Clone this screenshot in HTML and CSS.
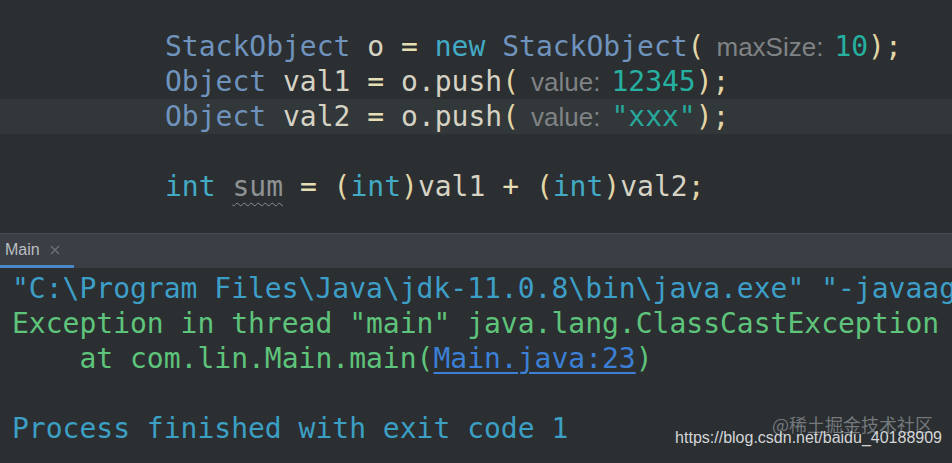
FILE: index.html
```html
<!DOCTYPE html>
<html>
<head>
<meta charset="utf-8">
<link rel="stylesheet" href="styles.css">
</head>
<body>
<div class="page">
  <div class="editor">
    <div class="line"><span class="type">StackObject</span> <span class="id">o</span> <span class="op">=</span> <span class="kw">new</span> <span class="type">StackObject</span><span class="paren">(</span><span class="hint">maxSize:</span><span class="num">10</span><span class="paren">)</span><span class="semi">;</span></div>
    <div class="line"><span class="type">Object</span> <span class="id">val1</span> <span class="op">=</span> <span class="id">o.push</span><span class="paren">(</span><span class="hint">value:</span><span class="num">12345</span><span class="paren">)</span><span class="semi">;</span></div>
    <div class="line current"><span class="type">Object</span> <span class="id">val2</span> <span class="op">=</span> <span class="id">o.push</span><span class="paren">(</span><span class="hint">value:</span><span class="str">"xxx"</span><span class="paren">)</span><span class="semi">;</span></div>
    <div class="line"> </div>
    <div class="line"><span class="kw">int</span> <span class="unused">sum</span> <span class="op">=</span> <span class="paren">(</span><span class="kw">int</span><span class="paren">)</span><span class="id">val1</span> <span class="op">+</span> <span class="paren">(</span><span class="kw">int</span><span class="paren">)</span><span class="id">val2</span><span class="semi">;</span></div>
  </div>
  <div class="tabbar">
    <div class="tab">
      <span class="tab-title">Main</span>
      <svg class="tab-close" width="10" height="10" viewBox="0 0 10 10"><path d="M1 1 L9 9 M9 1 L1 9" stroke="#6d7277" stroke-width="1.3" fill="none"/></svg>
    </div>
  </div>
  <div class="console">
    <div class="cline cmd">"C:\Program Files\Java\jdk-11.0.8\bin\java.exe" "-javaagent:C:\Program Files\JetBrains</div>
    <div class="cline err">Exception in thread "main" java.lang.ClassCastException</div>
    <div class="cline err">    at com.lin.Main.main(<span class="link">Main.java:23</span>)</div>
    <div class="cline"> </div>
    <div class="cline sys">Process finished with exit code 1</div>
  </div>
  <div class="watermark">
    <span class="wm-cn">@稀土掘金技术社区</span>
    <span class="wm-url">https://blog.csdn.net/baidu_40188909</span>
  </div>
</div>
</body>
</html>
```
FILE: styles.css
```css
html, body {
  margin: 0;
  padding: 0;
  background: #2b2f32;
}
.page {
  position: relative;
  width: 952px;
  height: 463px;
  overflow: hidden;
  background: #2b2f32;
}
.editor {
  height: 233px;
  box-sizing: border-box;
  padding-top: 29px;
  font-family: "DejaVu Sans Mono", monospace;
  font-size: 28px;
  line-height: 35px;
}
.line {
  height: 35px;
  padding-left: 165px;
  white-space: pre;
}
.line.current {
  background: #32373a;
}
.type { color: #6f93bd; }
.kw { color: #43aac4; }
.id { color: #d6d3c4; }
.op { color: #e6dfb5; }
.paren { color: #e3d6a6; }
.semi { color: #e3d6a6; }
.num { color: #25b0a0; }
.str { color: #27a89b; }
.unused {
  color: #8f9294;
  text-decoration: underline wavy #8a8d90;
  text-decoration-thickness: 1px;
  text-underline-offset: 6px;
}
.hint {
  display: inline-block;
  font-family: "Liberation Sans", Arial, sans-serif;
  font-size: 26px;
  color: #808385;
  padding: 0 11px 0 12px;
}
.tabbar {
  height: 35px;
  box-sizing: border-box;
  border-top: 1px solid #474b51;
  background: #3b3f45;
  display: flex;
}
.tab {
  width: 74px;
  box-sizing: border-box;
  padding-left: 5px;
  display: flex;
  align-items: center;
  gap: 10px;
  border-bottom: 3px solid #4a88c7;
}
.tab-title {
  font-family: "Liberation Sans", Arial, sans-serif;
  font-size: 16px;
  color: #b9bdc1;
}
.tab-close {
  display: block;
}
.console {
  padding-top: 3px;
  padding-left: 12px;
  font-family: "DejaVu Sans Mono", monospace;
  font-size: 28px;
  line-height: 35px;
}
.cline {
  height: 35px;
  white-space: pre;
}
.cmd { color: #3d9fc8; }
.err { color: #5fc47b; }
.sys { color: #3c9fc4; }
.link {
  color: #3b80d6;
  text-decoration: underline;
  text-decoration-thickness: 2px;
  text-underline-offset: 4px;
}
.watermark {
  position: absolute;
  right: 10px;
  bottom: 10px;
  width: 280px;
  height: 40px;
}
.wm-cn {
  position: absolute;
  right: 9px;
  top: 0;
  font-family: "Noto Sans CJK SC", sans-serif;
  font-size: 18px;
  line-height: 22px;
  color: rgba(140, 146, 150, 0.75);
}
.wm-url {
  position: absolute;
  right: 0;
  top: 15px;
  font-family: "Liberation Sans", Arial, sans-serif;
  font-size: 16px;
  line-height: 20px;
  color: #d4d6d8;
}
```
